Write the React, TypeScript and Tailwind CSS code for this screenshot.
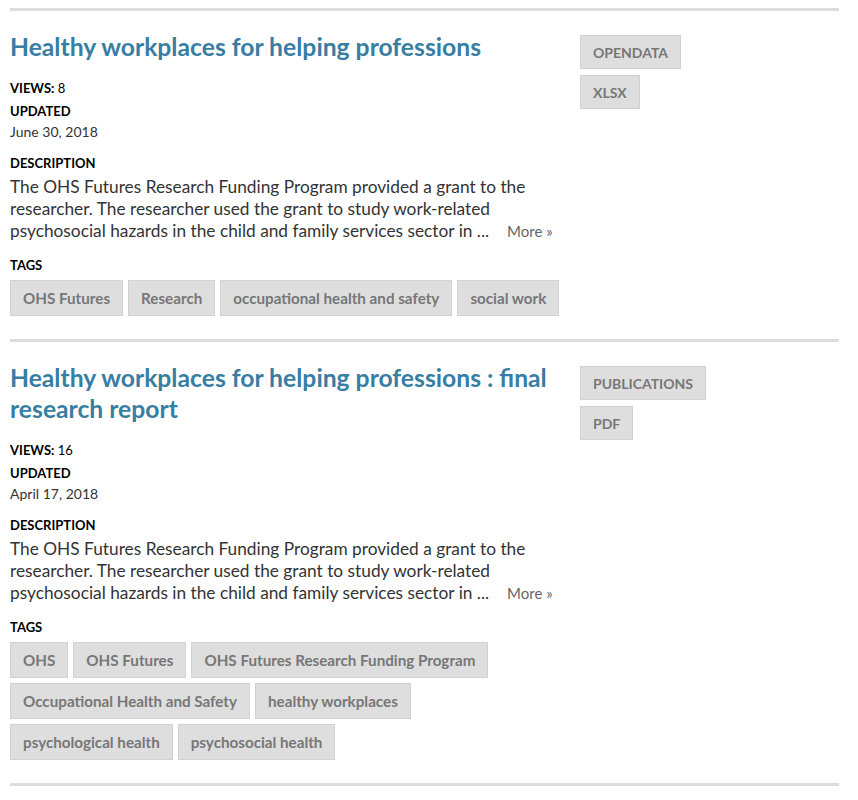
const font = { fontFamily: 'Lato, "Open Sans", sans-serif' }

interface Dataset {
    title: string
    views: number
    updated: string
    description: string[]
    formats: string[]
    tags: string[]
}

const DESCRIPTION = [
    'The OHS Futures Research Funding Program provided a grant to the',
    'researcher. The researcher used the grant to study work-related',
    'psychosocial hazards in the child and family services sector in ...',
]

const DATASETS: Dataset[] = [
    {
        title: 'Healthy workplaces for helping professions',
        views: 8,
        updated: 'June 30, 2018',
        description: DESCRIPTION,
        formats: ['OPENDATA', 'XLSX'],
        tags: ['OHS Futures', 'Research', 'occupational health and safety', 'social work'],
    },
    {
        title: 'Healthy workplaces for helping professions : final research report',
        views: 16,
        updated: 'April 17, 2018',
        description: DESCRIPTION,
        formats: ['PUBLICATIONS', 'PDF'],
        tags: [
            'OHS',
            'OHS Futures',
            'OHS Futures Research Funding Program',
            'Occupational Health and Safety',
            'healthy workplaces',
            'psychological health',
            'psychosocial health',
        ],
    },
]

function Chip({ label, upper }: { label: string; upper?: boolean }) {
    return (
        <span
            className={`inline-flex items-center border border-[#d2d2d2] bg-[#dedede] text-[#777] font-bold px-3 ${upper ? 'h-[34px] text-[14px]' : 'h-[36px] text-[15.2px]'}`}
        >
            {label}
        </span>
    )
}

function DatasetItem({ d }: { d: Dataset }) {
    const last = d.description[d.description.length - 1]
    return (
        <div className="border-t-[3px] border-[#dddddd] pt-5 pb-[23px] grid grid-cols-[552px_1fr] gap-x-[18px]">
            <div>
                <h2 className="text-[24.7px] leading-[31px] font-bold text-[#387ea3] pr-1">{d.title}</h2>

                <div className="mt-[16px] text-[13px] leading-[20px] text-black">
                    <span className="font-bold">VIEWS:</span> {d.views}
                </div>
                <div className="mt-[3px] text-[13px] leading-[20px] font-bold text-black">UPDATED</div>
                <div className="mt-[1px] text-[14px] leading-[20px] text-[#333]">{d.updated}</div>

                <div className="mt-[11px] text-[13px] leading-[20px] font-bold text-black">DESCRIPTION</div>
                <div className="mt-[3px] text-[17.3px] leading-[22px] text-[#333]">
                    {d.description.slice(0, -1).map((line) => (
                        <p key={line}>{line}</p>
                    ))}
                    <div className="flex items-baseline">
                        <p>{last}</p>
                        <span className="ml-[18px] text-[15px] text-[#666]">More »</span>
                    </div>
                </div>

                <div className="mt-[13px] text-[13px] leading-[20px] font-bold text-black">TAGS</div>
                <div className="mt-[5px] flex flex-wrap gap-[5px]">
                    {d.tags.map((t) => (
                        <Chip key={t} label={t} />
                    ))}
                </div>
            </div>

            <div className="pt-[4px] flex flex-col items-start gap-[6px]">
                {d.formats.map((f) => (
                    <Chip key={f} label={f} upper />
                ))}
            </div>
        </div>
    )
}

export default function App() {
    return (
        <div className="bg-white min-h-screen pt-2 px-[10px] w-[849px]" style={font}>
            {DATASETS.map((d) => (
                <DatasetItem key={d.title} d={d} />
            ))}
            <div className="border-t-[3px] border-[#dddddd]" />
        </div>
    )
}
